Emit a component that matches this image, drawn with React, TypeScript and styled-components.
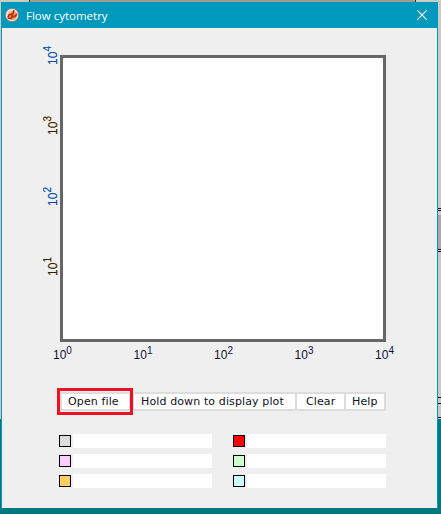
import React from 'react';
import styled, { createGlobalStyle } from 'styled-components';

const Y_TICKS = [4, 3, 2, 1];
const X_TICKS = [0, 1, 2, 3, 4];
const LEGEND_LEFT = ['#dddddd', '#ffccff', '#ffcc66'];
const LEGEND_RIGHT = ['#ff0000', '#ccffcc', '#ccffff'];
// bits of the windows behind, showing past the edges
const EDGE_MARKS = [208, 210, 249, 251, 397, 403, 417];

const GlobalStyle = createGlobalStyle`
  html, body {
    margin: 0;
    padding: 0;
    background: #c9ccc5;
  }
`;

const Desktop = styled.div`
  position: relative;
  width: 441px;
  height: 514px;
  overflow: hidden;
  display: flex;
  flex-direction: column;
  font-family: 'Liberation Sans', Arial, sans-serif;
`;

const BackdropTop = styled.div`
  height: 419px;
  background: #c9ccc5;
`;

const BackdropTeal = styled.div`
  flex: 1;
  background: #007a80;
`;

const TopStrip = styled.div`
  position: absolute;
  top: 0;
  left: 29px;
  width: 385px;
  height: 2px;
  background: #9c9c9c;
  border-left: 1px solid #333333;
  border-right: 1px solid #333333;
`;

const EdgePatch = styled.div`
  position: absolute;
  top: 215px;
  right: 0;
  width: 3px;
  height: 34px;
  background: #a9aaa6;
`;

const EdgeMark = styled.div<{ $y: number }>`
  position: absolute;
  top: ${({ $y }) => $y}px;
  right: 0;
  width: 3px;
  height: 1px;
  background: #111111;
`;

const Window = styled.div`
  position: absolute;
  top: 2px;
  left: 1px;
  width: 437px;
  height: 507px;
  box-sizing: border-box;
  display: flex;
  flex-direction: column;
  background: #0099bb;
  border: 1px solid #0099bb;
  border-bottom-color: #007a80;
`;

const TitleBar = styled.div`
  height: 25px;
  box-sizing: border-box;
  padding-bottom: 1px;
  flex-shrink: 0;
  display: flex;
  align-items: center;
  gap: 7px;
  margin-left: 3px;
  color: #ffffff;
  font-family: 'Open Sans', 'Liberation Sans', sans-serif;
  font-size: 11.5px;
`;

const TitleText = styled.span`
  flex: 1;
`;

const CloseIcon = styled.svg`
  width: 10px;
  height: 10px;
  margin-right: 10px;
`;

const Client = styled.div`
  flex: 1;
  background: #efefef;
  display: flex;
  flex-direction: column;
  padding: 27px 50px 0 44px;
`;

const PlotRow = styled.div`
  display: flex;
  align-items: flex-start;
  height: 287px;
`;

const YAxis = styled.div`
  width: 14px;
  height: 230px;
  margin-top: -9px;
  display: flex;
  flex-direction: column;
  justify-content: space-between;
  align-items: flex-end;
`;

const YTick = styled.div<{ $blue: boolean }>`
  writing-mode: vertical-rl;
  transform: rotate(180deg);
  font-size: 12px;
  line-height: 14px;
  color: ${({ $blue }) => ($blue ? '#0b4ea6' : '#222222')};
  text-shadow: ${({ $blue }) =>
    $blue ? '0 -0.5px rgba(0, 120, 230, 0.5)' : '0 0.6px rgba(255, 165, 0, 0.7)'};
`;

const Plot = styled.div`
  width: 326px;
  height: 287px;
  box-sizing: border-box;
  border: 3px solid #666666;
  background: #ffffff;
`;

const XAxis = styled.div`
  display: flex;
  justify-content: space-between;
  align-items: flex-end;
  width: 341px;
  height: 19px;
  margin: 1px 0 0 7px;
  font-size: 12px;
  line-height: 14px;
  color: #111133;
`;

const Exp = styled.sup`
  font-size: 10px;
  line-height: 0;
`;

const ButtonRow = styled.div`
  display: flex;
  gap: 2px;
  align-self: flex-start;
  margin: 30px 0 0 14px;
  padding: 2px;
  background: #dddddd;
`;

const Button = styled.button<{ $width: number; $inset: number; $highlight?: boolean }>`
  width: ${({ $width }) => $width}px;
  height: 15px;
  padding: 0 0 0 ${({ $inset }) => $inset}px;
  border: none;
  background: #ffffff;
  color: #111122;
  font-family: 'DejaVu Sans', sans-serif;
  font-size: 11px;
  line-height: 15px;
  letter-spacing: 0.12px;
  text-align: left;
  white-space: nowrap;
  position: relative;
  ${({ $highlight }) =>
    $highlight &&
    `
    margin-right: 3px;
    &::after {
      content: '';
      position: absolute;
      inset: -6px -4px -6px -5px;
      border: 3px solid #ee1122;
    }
  `}
`;

const Legend = styled.div`
  display: flex;
  gap: 21px;
  margin: 23px 0 0 13px;
`;

const LegendColumn = styled.div`
  display: flex;
  flex-direction: column;
  gap: 6px;
`;

const LegendRow = styled.div`
  display: flex;
  align-items: center;
  gap: 2px;
  height: 14px;
`;

const Swatch = styled.div<{ $color: string }>`
  width: 12px;
  height: 12px;
  box-sizing: border-box;
  border: 1px solid #000000;
  background: ${({ $color }) => $color};
`;

const LegendField = styled.div`
  width: 139px;
  height: 14px;
  background: #ffffff;
`;

export default function App() {
  return (
    <Desktop>
      <GlobalStyle />
      <BackdropTop />
      <BackdropTeal />
      <TopStrip />
      <EdgePatch />
      {EDGE_MARKS.map(y => (
        <EdgeMark key={y} $y={y} />
      ))}
      <Window>
        <TitleBar>
          <svg width="14" height="14" viewBox="0 0 14 14">
            <circle cx="7" cy="7" r="6.6" fill="#e9e2dc" stroke="#8c7f78" strokeWidth="0.8" />
            <circle cx="7.5" cy="7.5" r="4.6" fill="#f0a070" />
            <path
              d="M6.8 6.4C4.4 6 2.8 8 3.4 9.6c.6 1.2 2.6.8 3.4-.8M8.8 2.8L6.4 10.4M8 8.6c1.6.2 3-.8 3.6-2.2"
              stroke="#b83208"
              strokeWidth="1.7"
              fill="none"
              strokeLinecap="round"
            />
          </svg>
          <TitleText>Flow cytometry</TitleText>
          <CloseIcon viewBox="0 0 10 10">
            <path d="M0.3 0.3L9.7 9.7M9.7 0.3L0.3 9.7" stroke="#ffffff" strokeWidth="1.1" />
          </CloseIcon>
        </TitleBar>
        <Client>
          <PlotRow>
            <YAxis>
              {Y_TICKS.map(n => (
                <YTick key={n} $blue={n % 2 === 0}>
                  10<Exp>{n}</Exp>
                </YTick>
              ))}
            </YAxis>
            <Plot />
          </PlotRow>
          <XAxis>
            {X_TICKS.map(n => (
              <span key={n}>
                10<Exp>{n}</Exp>
              </span>
            ))}
          </XAxis>
          <ButtonRow>
            <Button $width={67} $inset={6} $highlight>Open file</Button>
            <Button $width={161} $inset={7}>Hold down to display plot</Button>
            <Button $width={47} $inset={9}>Clear</Button>
            <Button $width={38} $inset={6}>Help</Button>
          </ButtonRow>
          <Legend>
            <LegendColumn>
              {LEGEND_LEFT.map(color => (
                <LegendRow key={color}>
                  <Swatch $color={color} />
                  <LegendField />
                </LegendRow>
              ))}
            </LegendColumn>
            <LegendColumn>
              {LEGEND_RIGHT.map(color => (
                <LegendRow key={color}>
                  <Swatch $color={color} />
                  <LegendField />
                </LegendRow>
              ))}
            </LegendColumn>
          </Legend>
        </Client>
      </Window>
    </Desktop>
  );
}
